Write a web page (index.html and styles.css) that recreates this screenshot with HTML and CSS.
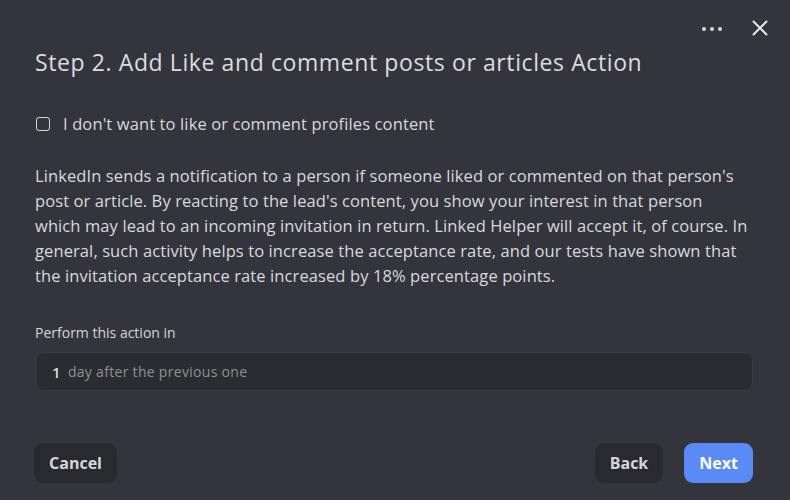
FILE: index.html
```html
<!DOCTYPE html>
<html>
<head>
<meta charset="utf-8">
<link rel="stylesheet" href="styles.css">
</head>
<body>
<div class="dialog">
  <div class="topbar">
    <span class="dots"><i></i><i></i><i></i></span>
    <svg class="close" width="16" height="16" viewBox="0 0 16 16"><path d="M1.5 1.5L14.5 14.5M14.5 1.5L1.5 14.5" stroke="#e6e6e9" stroke-width="2" stroke-linecap="round"/></svg>
  </div>
  <h1 class="title">Step 2. Add Like and comment posts or articles Action</h1>
  <label class="check"><span class="box"></span><span>I don't want to like or comment profiles content</span></label>
  <p class="desc">LinkedIn sends a notification to a person if someone liked or commented on that person's post or article. By reacting to the lead's content, you show your interest in that person which may lead to an incoming invitation in return. Linked Helper will accept it, of course. In general, such activity helps to increase the acceptance rate, and our tests have shown that the invitation acceptance rate increased by 18% percentage points.</p>
  <div class="field-label">Perform this action in</div>
  <div class="field"><span class="num">1</span><span class="suffix">day after the previous one</span></div>
  <div class="footer">
    <button class="btn dark cancel">Cancel</button>
    <div class="right">
      <button class="btn dark back">Back</button>
      <button class="btn primary">Next</button>
    </div>
  </div>
</div>
</body>
</html>
```
FILE: styles.css
```css
* { box-sizing: border-box; }
html, body { margin: 0; padding: 0; }
body {
  width: 790px; height: 500px;
  background: #34353c;
  font-family: "Open Sans", Lato, sans-serif;
  color: #d9d9dc;
  overflow: hidden;
}
.dialog { padding: 0 37px 0 35px; position: relative; height: 500px; }
.topbar {
  display: flex; justify-content: flex-end; align-items: center; gap: 30px;
  height: 56px; margin-right: -15px;
}
.dots { display: flex; gap: 4px; margin-top: 2px; }
.dots i { width: 4px; height: 4px; border-radius: 50%; background: #d8d8dc; display: block; }
.close { display: block; margin-top: -1px; }
.title {
  margin: -10px 0 0; font-weight: 400; font-size: 23px; line-height: 32px;
  letter-spacing: 0.6px; color: #dcdcdf;
}
.check { display: flex; align-items: center; gap: 13px; margin-top: 35px; font-size: 16.5px; line-height: 22px; letter-spacing: 0.12px; }
.box { width: 14px; height: 14px; border: 1.5px solid #d6d6da; border-radius: 3px; margin-left: 1px; flex: none; }
.desc { margin: 28px 0 0; max-width: 714px; font-size: 16.5px; line-height: 25px; letter-spacing: 0.1px; color: #d9d9dc; }
.field-label { margin-top: 36px; font-size: 14px; line-height: 18px; color: #d4d4d8; }
.field {
  margin-top: 10px; height: 39px; border-radius: 8px; background: #2b2c31;
  border: 1px solid #3c3d44; display: flex; align-items: center; padding-left: 16px; font-size: 14px;
  letter-spacing: 0.3px;
}
.num { color: #d8d8dc; font-size: 15px; font-weight: 600; margin-right: 7px; }
.suffix { color: #8f9096; }
.footer { position: absolute; left: 34px; right: 37px; top: 443px; display: flex; justify-content: space-between; }
.right { display: flex; gap: 21px; }
.btn {
  height: 40px; border: 0; border-radius: 9px; font-family: inherit; font-weight: 700;
  font-size: 16px; padding: 0; color: #d6d6d9; cursor: pointer; text-align: center;
}
.btn.cancel { width: 83px; }
.btn.back { width: 68px; }
.btn.dark { background: #292a2f; }
.btn.primary { background: #5a8af5; color: #fff; width: 69px; }
```
